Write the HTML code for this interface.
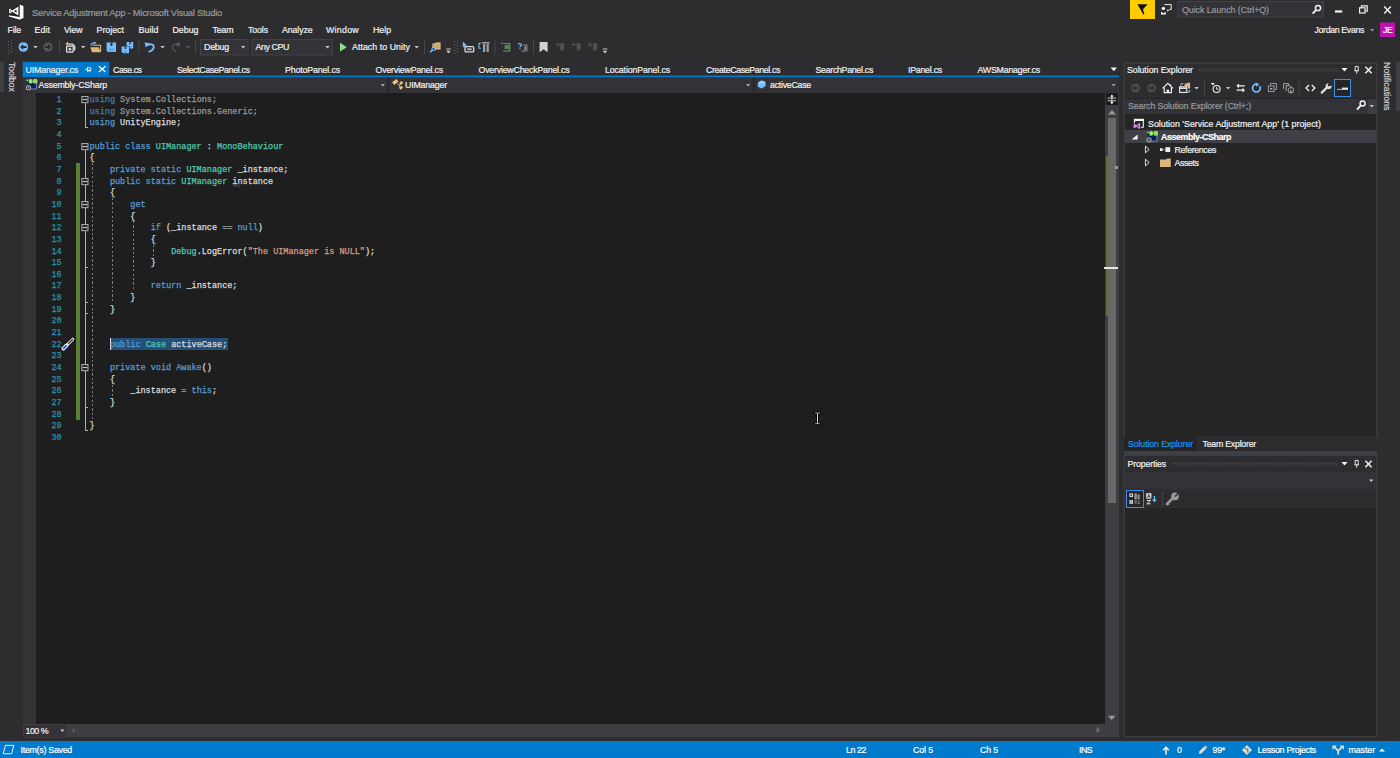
<!DOCTYPE html>
<html><head><meta charset="utf-8"><title>Service Adjustment App - Microsoft Visual Studio</title>
<style>
html,body{margin:0;padding:0;width:1400px;height:758px;overflow:hidden;background:#2d2d30;}
body{position:relative;font-family:"Liberation Sans",sans-serif;}
div,span,svg,pre{position:absolute;display:block;}
span{white-space:pre;line-height:12px;-webkit-text-stroke-width:0.2px;}
pre{margin:0;font-family:"Liberation Mono",monospace;white-space:pre;-webkit-text-stroke-width:0.25px;}
</style></head>
<body>
<div style="left:0px;top:62px;width:4px;height:30px;background:#3f3f46;"></div>
<div style="left:1396px;top:62px;width:4px;height:49px;background:#3f3f46;"></div>
<div style="left:23px;top:62px;width:86px;height:14px;background:#007acc;"></div>
<div style="left:23px;top:77px;width:1096px;height:16px;background:#333337;"></div>
<div style="left:23px;top:93px;width:1082px;height:631px;background:#1e1e1e;"></div>
<div style="left:23px;top:93px;width:13px;height:631px;background:#333333;"></div>
<div style="left:1105px;top:93px;width:14px;height:631px;background:#3e3e42;"></div>
<div style="left:1106px;top:93px;width:12px;height:12px;background:#1b1b1c;"></div>
<div style="left:1107.5px;top:118px;width:8px;height:385px;background:#686868;"></div>
<div style="left:1106px;top:155.5px;width:2px;height:160px;background:#577430;"></div>
<div style="left:1104px;top:267px;width:14px;height:2px;background:#e8e8e8;"></div>
<div style="left:1115px;top:166px;width:2.5px;height:3px;background:#9a9a9a;"></div>
<div style="left:23px;top:724px;width:1096px;height:13px;background:#3e3e42;"></div>
<div style="left:23.5px;top:724.5px;width:42px;height:12px;background:#333337;box-shadow:0 0 0 0.5px #434346;"></div>
<div style="left:0px;top:741px;width:1400px;height:17px;background:#007acc;"></div>
<div style="left:1125px;top:64px;width:251px;height:373px;background:#252526;box-shadow:0 0 0 1.5px #3a3a3f;"></div>
<div style="left:1125px;top:64px;width:251px;height:13px;background:#2d2d30;"></div>
<div style="left:1125px;top:77px;width:251px;height:21px;background:#2d2d30;"></div>
<div style="left:1125px;top:98.5px;width:251px;height:15px;background:#333337;"></div>
<div style="left:1367.5px;top:98.5px;width:8.5px;height:15px;background:#3e3e42;"></div>
<div style="left:1125px;top:130px;width:251px;height:13px;background:#3f3f46;"></div>
<div style="left:1124px;top:436px;width:73px;height:14.5px;background:#252526;"></div>
<div style="left:1197.5px;top:436.5px;width:179px;height:14px;background:#2d2d30;box-shadow:0 -0.5px 0 0 #3f3f46;"></div>
<div style="left:1123.5px;top:450.5px;width:253.5px;height:5.5px;background:#3f3f46;"></div>
<div style="left:1125px;top:457px;width:251px;height:278.5px;background:#252526;box-shadow:0 0 0 1.5px #3a3a3f;"></div>
<div style="left:1125px;top:456px;width:251px;height:16px;background:#2d2d30;"></div>
<div style="left:1125px;top:472px;width:251px;height:16.5px;background:#333337;"></div>
<div style="left:1125px;top:488.5px;width:251px;height:19px;background:#2d2d30;"></div>
<span style="left:8px;top:62px;font-size:8.8px;color:#d0d0d0;transform-origin:0 0;transform:translate(10px,0) rotate(90deg);letter-spacing:-0.1px;">Toolbox</span>
<span style="left:1381px;top:62px;font-size:8.8px;color:#d0d0d0;transform-origin:0 0;transform:translate(12px,0) rotate(90deg);letter-spacing:0.05px;">Notifications</span>
<div style="left:8px;top:40px;width:4.5px;height:13.5px;background-image:radial-gradient(circle,#707074 0.45px,transparent 0.9px),radial-gradient(circle,#707074 0.45px,transparent 0.9px);background-size:2.92px 2.92px;background-repeat:repeat-y;background-position:-0.76px 0,2.14px 1.46px;"></div>
<div style="left:454px;top:40px;width:4.5px;height:13.5px;background-image:radial-gradient(circle,#707074 0.45px,transparent 0.9px),radial-gradient(circle,#707074 0.45px,transparent 0.9px);background-size:2.92px 2.92px;background-repeat:repeat-y;background-position:-0.76px 0,2.14px 1.46px;"></div>
<div style="left:1198px;top:67.8px;width:140px;height:4.4px;background-image:radial-gradient(circle,#55555a 0.55px,transparent 0.95px),radial-gradient(circle,#55555a 0.55px,transparent 0.95px);background-size:2.92px 2.92px;background-position:0 0,1.46px 1.46px;"></div>
<div style="left:1171px;top:461.8px;width:167px;height:4.4px;background-image:radial-gradient(circle,#55555a 0.55px,transparent 0.95px),radial-gradient(circle,#55555a 0.55px,transparent 0.95px);background-size:2.92px 2.92px;background-position:0 0,1.46px 1.46px;"></div>
<svg style="left:0;top:0;" width="1400" height="758" viewBox="0 0 1400 758"><path d="M19.7,4.6L23.5,6.1V18.1L19.7,19.7Z M8.8,15.3L19.8,17V19.7L8.8,16.5Z M18.4,6.4V15.6L12.2,11.7L10,13.6L9.2,13.2V9L10,8.6L12.2,10.4Z M16.5,9.4L14,11L16.5,12.7Z M10,10.2V11.9L11,11.05Z" fill="none" stroke="#19191b" stroke-width="1.4" stroke-linejoin="round"/><path fill-rule="evenodd" d="M19.7,4.6L23.5,6.1V18.1L19.7,19.7Z M8.8,15.3L19.8,17V19.7L8.8,16.5Z M18.4,6.4V15.6L12.2,11.7L10,13.6L9.2,13.2V9L10,8.6L12.2,10.4Z M16.5,9.4L14,11L16.5,12.7Z M10,10.2V11.9L11,11.05Z" fill="#ffffff"/><circle cx="23.3" cy="47" r="4.8" fill="#75beff"/><path d="M20,47l3.2,-3v2.1h3.4v1.8h-3.4v2.1z" fill="#2d2d30"/><path d="M33.3,46h4.4l-2.2,2.5z" fill="#c8c8c8"/><circle cx="48" cy="47" r="4.6" fill="#58585b"/><path d="M51.3,47l-3.2,-3v2.1h-3.4v1.8h3.4v2.1z" fill="#2d2d30"/><path d="M59.5,40V54" stroke="#46464a" stroke-width="1"/><g fill="none" stroke="#e4e4e4" stroke-width="1.25"><path d="M68.5,44.2h4.2l2,2v4.3"/><rect x="66.6" y="46.2" width="6.6" height="5.8" rx="0.5"/><path d="M68.3,49.2h3.2M69.9,47.8v3"/></g><path d="M67.4,41.6l0.9,1.6 1.7,0.6-1.7,0.7-0.9,1.6-0.9,-1.6-1.7,-0.7 1.7,-0.6z" fill="#e8c060"/><path d="M81,46h4.4l-2.2,2.5z" fill="#c8c8c8"/><path d="M92.3,45.2h8.3v6.6" fill="none" stroke="#dcb67a" stroke-width="1.1"/><path d="M90.2,47.2h8.6l1.9,5h-8.6z" fill="#dcb67a"/><path d="M91,45.5c0.2,-2 1.6,-2.8 3.4,-2.6" fill="none" stroke="#75beff" stroke-width="1.2"/><path d="M94,41.4l2.4,1.6-2.4,1.6z" fill="#75beff"/><path d="M106.6,42.6h9.4v9.4h-8.0l-1.4,-1.4z" fill="#75beff"/><rect x="110.54799999999999" y="42.6" width="1.8800000000000001" height="3.384" fill="#2d2d30"/><rect x="108.94999999999999" y="48.428000000000004" width="4.7" height="2.82" fill="#5fa5e0"/><path d="M126.6,42h6.6v6.4h-5.199999999999999l-1.4,-1.4z" fill="#75beff"/><rect x="129.37199999999999" y="42" width="1.32" height="2.304" fill="#2d2d30"/><rect x="128.25" y="45.968" width="3.3" height="1.92" fill="#5fa5e0"/><rect x="120.9" y="46" width="8.6" height="7.6" fill="#2d2d30"/><path d="M121.6,46.6h7.4v6.6h-6.0l-1.4,-1.4z" fill="#75beff"/><rect x="124.708" y="46.6" width="1.4800000000000002" height="2.376" fill="#2d2d30"/><rect x="123.44999999999999" y="50.692" width="3.7" height="1.9799999999999998" fill="#5fa5e0"/><path d="M139,40V54" stroke="#46464a" stroke-width="1"/><path d="M147.2,45.6C150,43.2 154,44.2 153.7,47.3C153.5,49.6 150.8,51 148.6,52" fill="none" stroke="#75beff" stroke-width="1.9"/><path d="M144.6,42.3l5.2,1.1-4.1,4.1z" fill="#75beff"/><path d="M160.3,46h4.4l-2.2,2.5z" fill="#c8c8c8"/><path d="M177.8,45.4C175.4,43.4 172,44.4 172.2,47.2C172.4,49.3 174.5,50.6 176.4,51.8" fill="none" stroke="#58585b" stroke-width="1.1"/><path d="M180.2,42.3l-4.6,1 3.6,3.6z" fill="#58585b"/><path d="M186,46h4.4l-2.2,2.5z" fill="#58585b"/><path d="M195.5,40V54" stroke="#46464a" stroke-width="1"/><rect x="200.5" y="39.5" width="47.5" height="15.5" fill="#333337" stroke="#434346" stroke-width="1"/><path d="M241,46h4.4l-2.2,2.5z" fill="#c8c8c8"/><rect x="252" y="39.5" width="80.5" height="15.5" fill="#333337" stroke="#434346" stroke-width="1"/><path d="M325.3,46h4.4l-2.2,2.5z" fill="#c8c8c8"/><path d="M340,42.8l6.8,4.4-6.8,4.4z" fill="#8ae28a"/><path d="M414.5,46h4.4l-2.2,2.5z" fill="#c8c8c8"/><path d="M424.5,40V54" stroke="#46464a" stroke-width="1"/><path d="M432,43h3l0.8,-1h5.2v7.9h-9z" fill="#dcb67a" stroke="#1c2748" stroke-width="0.7"/><path d="M433.4,45.4h6.4M433.4,47.4h6.4" stroke="#b8924f" stroke-width="0.7"/><circle cx="433.5" cy="48.9" r="1.6" fill="#2d2d30" stroke="#75beff" stroke-width="1.2"/><path d="M432.3,50.2l-2.2,2" stroke="#75beff" stroke-width="1.5"/><path d="M446.2,48.6h4.6v1h-4.6z M446.2,50.800000000000004h4.6l-2.3,2.6z" fill="#c8c8c8"/><path d="M462.8,41.6l4.2,3.9-1.9,0.2 1,2.1-1,0.5-1,-2.1-1.3,1.3z" fill="#75beff"/><rect x="465" y="46.6" width="8.7" height="5.3" rx="1" fill="none" stroke="#dcdcdc" stroke-width="1.3"/><rect x="467.2" y="48.4" width="4.4" height="1.7" fill="#c0c0c0"/><path d="M481,43.2h-2v5h2" fill="none" stroke="#75beff" stroke-width="1.1"/><path d="M482,42h7.6v1.4h-7.6z M483,44h2.2v8h-2.2z M486.6,44h2.2v8h-2.2z" fill="#a2a2a2"/><path d="M495,40V54" stroke="#46464a" stroke-width="1"/><path d="M501.2,43.4h2.2M504.2,43.6h5.6v7.4h-6.6" fill="none" stroke="#8d8d8d" stroke-width="1"/><rect x="504.6" y="45" width="4.6" height="4" fill="#4f8a57"/><path d="M518.4,44.6c0.3,-1.6 3.2,-1.5 3,0.3c-0.1,1 -1.5,1.2 -1.5,2.3M519.9,48.2v1" fill="none" stroke="#75beff" stroke-width="1.2"/><path d="M522.8,45h4.2v6h-5.4" fill="none" stroke="#8d8d8d" stroke-width="1"/><rect x="524.2" y="46.4" width="2" height="3.6" fill="#8d8d8d"/><path d="M533.5,40V54" stroke="#46464a" stroke-width="1"/><path d="M539.6,42h8v10.2l-4,-3-4,3z" fill="#d2d2d2"/><path d="M560.2,43.2h3.8v8l-1.9,-1.6-1.9,1.6z M556,44.6l2.4,-2v1.4h1.6v1.2h-1.6v1.4z" fill="#515154"/><path d="M576.7,43.2h3.8v8l-1.9,-1.6-1.9,1.6z M575.8,44.6l-2.4,-2v1.4h-1.8v1.2h1.8v1.4z" fill="#515154"/><path d="M593.2,43.2h3.8v8l-1.9,-1.6-1.9,1.6z" fill="#515154"/><path d="M588,42.6l4,4M592,42.6l-4,4" stroke="#515154" stroke-width="1.1"/><path d="M602.7,48.6h4.6v1h-4.6z M602.7,50.800000000000004h4.6l-2.3,2.6z" fill="#c8c8c8"/><rect x="22.7" y="75.5" width="1096.3" height="1.7" fill="#007acc"/><rect x="22.7" y="61.8" width="86.3" height="14" fill="#007acc"/><path d="M85,69.4h2.4M87.5,67v4.8M87.5,67.8h3.3v3.2h-3.3M87.5,70.3h3.3" fill="none" stroke="#ffffff" stroke-opacity="0.88" stroke-width="0.95"/><path d="M98.9,66.2l6.5,5.8M105.4,66.2l-6.5,5.8" stroke="#ffffff" stroke-width="1.25"/><path d="M1110.6,67.6h6.4l-3.2,3.6z" fill="#f1f1f1"/><rect x="387" y="77" width="2.4" height="16" fill="#29292c"/><rect x="752.8" y="77" width="2.4" height="16" fill="#29292c"/><path d="M380.6,84h4.4l-2.2,2.5z" fill="#a8a8a8"/><path d="M746,84h4.4l-2.2,2.5z" fill="#a8a8a8"/><path d="M1111.4,84h4.4l-2.2,2.5z" fill="#9a9a9a"/><rect x="27.400000000000002" y="82" width="9" height="7" fill="#0f1d52"/><path d="M36.4,83.4v5.6h-6.6" fill="none" stroke="#7f93c8" stroke-width="0.9"/><rect x="26.3" y="79.6" width="1.8" height="1.3" fill="#86e25c"/><rect x="28.6" y="79" width="4" height="4.6" rx="1.7" fill="#86e25c"/><rect x="33.0" y="79" width="4.4" height="4.6" rx="1.3" fill="#86e25c"/><rect x="29.900000000000002" y="80.6" width="1.6" height="1.4" fill="#c8f0b0"/><circle cx="28.5" cy="87.7" r="2.1" fill="#2a2a2c" stroke="#a4a4a4" stroke-width="1.1"/><circle cx="28.5" cy="87.7" r="0.7" fill="#a4a4a4"/><g fill="#e8c47e"><rect x="392.6" y="80.2" width="5.4" height="3.4" transform="rotate(-38 395.3 81.9)"/><rect x="399.6" y="81.6" width="3.2" height="2.6" transform="rotate(-38 401.2 82.9)"/><rect x="399.4" y="86.4" width="3.2" height="2.6" transform="rotate(-38 401 87.7)"/></g><path d="M397.2,83.4l2.4,2.4M399.4,85.8l1,-2M399.4,85.8l0.6,1.4" stroke="#e8c47e" stroke-width="0.9" fill="none"/><path d="M757.8,82.6l3.9,-2.3 3.9,1.5v4.1l-3.9,2.5-3.9,-1.7z" fill="#75beff"/><path d="M759.2,83.3l2.6,-1.5 2.2,0.8" fill="none" stroke="#e0f0ff" stroke-width="0.8"/><path d="M1107.6,98.1h8.6M1107.6,100.8h8.6" stroke="#f1f1f1" stroke-width="0.8"/><path d="M1111.9,95v8.8" stroke="#f1f1f1" stroke-width="0.9"/><path d="M1110.3,96.8l1.6,-2.2 1.6,2.2zM1110.3,102l1.6,2.2 1.6,-2.2z" fill="#f1f1f1"/><path d="M1108,114.4l4,-4.4 4,4.4z" fill="#999999"/><path d="M1107.9,715.7l3.8,4.3 3.8,-4.3z" fill="#999999"/><path d="M74.6,727.4v6.4l-3.4,-3.2z" fill="#555558"/><path d="M1096.5,726.8v6.4l3.9,-3.2z" fill="#6a6a6c"/><path d="M60.2,729.6h4.4l-2.2,2.5z" fill="#c8c8c8"/><path d="M63.8,348.2L72.8,339.2" stroke="#e4e4e4" stroke-width="3" stroke-linecap="round"/><path d="M63.4,348.6L66.4,345.6" stroke="#e4e4e4" stroke-width="4" stroke-linecap="round"/><path d="M68.6,343.4L72.6,339.4" stroke="#1e1e1e" stroke-width="1.1" stroke-linecap="round"/><path d="M63.6,348.4L66,346" stroke="#2f6fd0" stroke-width="2" stroke-linecap="round"/><path d="M817.5,413v10.6M815.2,412.8c1.2,0 1.9,0.2 2.3,0.8c0.4,-0.6 1.1,-0.8 2.3,-0.8M815.2,423.8c1.2,0 1.9,-0.2 2.3,-0.8c0.4,0.6 1.1,0.8 2.3,0.8" fill="none" stroke="#000000" stroke-width="2.8" stroke-linecap="round"/><path d="M817.5,413v10.6M815.2,412.8c1.2,0 1.9,0.2 2.3,0.8c0.4,-0.6 1.1,-0.8 2.3,-0.8M815.2,423.8c1.2,0 1.9,-0.2 2.3,-0.8c0.4,0.6 1.1,0.8 2.3,0.8" fill="none" stroke="#d4d4d4" stroke-width="1"/><path d="M233.4,186h7" stroke="#8c8c8c" stroke-width="1" stroke-dasharray="1.1 1.3"/><rect x="1130" y="0" width="25" height="19" fill="#ffcc00"/><path d="M1137.4,4.2H1147.6L1143,9.2L1144.4,14.6L1143.4,14.6Z" fill="#111111"/><path d="M1164.4,4.6h6.8v5h-2l-1.6,1.6v-1.6" fill="none" stroke="#f1f1f1" stroke-width="1"/><circle cx="1163.4" cy="8.4" r="1.7" fill="#f1f1f1"/><path d="M1161,14.4v-2.6l2.4,1.4 2.4,-1.4v2.6z" fill="#f1f1f1"/><rect x="1178" y="1.5" width="145.5" height="15.5" fill="#333337" stroke="#434346" stroke-width="1"/><circle cx="1318" cy="8" r="2.6" fill="none" stroke="#f1f1f1" stroke-width="1.5"/><path d="M1316.18,9.82L1312.6,13.6" stroke="#f1f1f1" stroke-width="1.9"/><rect x="1335" y="10.4" width="7.2" height="2.2" fill="#f1f1f1"/><path d="M1361.4,7.4v-1.6h5.8v5.4h-1.6" fill="none" stroke="#f1f1f1" stroke-width="1.2"/><rect x="1359.6" y="7.8" width="5.4" height="5.2" fill="none" stroke="#f1f1f1" stroke-width="1.2"/><path d="M1384.2,6.6l6.6,6.8M1390.8,6.6l-6.6,6.8" stroke="#f1f1f1" stroke-width="1.5"/><path d="M1370,29h4.4l-2.2,2.5z" fill="#999999"/><rect x="1380" y="22.5" width="15" height="14.5" fill="#c012b0"/><path d="M1341.4,68h6.2l-3.1,3.4z" fill="#f1f1f1"/><path d="M1354.4,70.8h4.6M1356.7,70.8v2.8M1355.2,66.4h3v4.4M1355.2,66.4v4.4" fill="none" stroke="#f1f1f1" stroke-width="0.95"/><path d="M1365.4,66.8l6.2,6.4M1371.6,66.8l-6.2,6.4" stroke="#f1f1f1" stroke-width="1.55"/><path d="M1341.4,462h6.2l-3.1,3.4z" fill="#f1f1f1"/><path d="M1354.4,464.8h4.6M1356.7,464.8v2.8M1355.2,460.4h3v4.4M1355.2,460.4v4.4" fill="none" stroke="#f1f1f1" stroke-width="0.95"/><path d="M1365.4,460.8l6.2,6.4M1371.6,460.8l-6.2,6.4" stroke="#f1f1f1" stroke-width="1.55"/><circle cx="1135.6" cy="88" r="4.5" fill="#4b4b4e"/><path d="M1132.6,88l2.8,-2.6v1.8h3v1.6h-3v1.8z" fill="#2d2d30"/><circle cx="1151.6" cy="88" r="4.5" fill="#4b4b4e"/><path d="M1154.6,88l-2.8,-2.6v1.8h-3v1.6h3v1.8z" fill="#2d2d30"/><path d="M1162.6,88.4l5.2,-5 5.2,5M1164.2,87.6v5h7.2v-5M1170.4,84.2v1.6" fill="none" stroke="#f1f1f1" stroke-width="1.2"/><rect x="1166.6" y="89.6" width="2.4" height="3" fill="#f1f1f1"/><rect x="1179.6" y="86.8" width="7.2" height="5.6" fill="none" stroke="#f1f1f1" stroke-width="1.1"/><path d="M1179.6,88.2h7.2" stroke="#f1f1f1" stroke-width="1.4"/><path d="M1184.6,83.6h2l0.6,-0.8h2.9v5.6h-2.4v-2.2h-3.1z" fill="#dcb67a"/><path d="M1180.4,85.6c0.4,-1.6 1.6,-2.2 3,-2" fill="none" stroke="#75beff" stroke-width="1.1"/><path d="M1187.6,92.4c1.2,0 2.2,-0.8 2.4,-2.2" fill="none" stroke="#75beff" stroke-width="1.1"/><path d="M1194.4,87h4.4l-2.2,2.5z" fill="#c8c8c8"/><path d="M1204.5,81V95" stroke="#46464a" stroke-width="1"/><circle cx="1216.6" cy="89" r="3.5" fill="none" stroke="#f1f1f1" stroke-width="1.1"/><path d="M1216.6,86.8v2.4h2" fill="none" stroke="#f1f1f1" stroke-width="0.9"/><path d="M1210.8,83h4l-2,2.6z" fill="#f1f1f1"/><path d="M1226,87h4.4l-2.2,2.5z" fill="#c8c8c8"/><path d="M1238,85.8h6.8M1236.6,90.2h6.8" stroke="#f1f1f1" stroke-width="1.2"/><path d="M1239,83.4l-2.6,2.4 2.6,2.4zM1242.4,87.8l2.6,2.4-2.6,2.4z" fill="#f1f1f1"/><path d="M1259.8,86.2A3.9,3.9 0 1 1 1256.2,84.2" fill="none" stroke="#75beff" stroke-width="1.7"/><path d="M1255.6,82.2l3.6,2-3,2.6z" fill="#75beff"/><rect x="1268.4" y="86" width="5.6" height="5.6" fill="#2d2d30" stroke="#9a9a9a" stroke-width="1"/><path d="M1270.4,85.4v-1.8h6v5.8h-1.8" fill="none" stroke="#9a9a9a" stroke-width="1"/><rect x="1270.2" y="88" width="2" height="1.6" fill="#75beff"/><path d="M1283.6,89v-5.4h5v1.6M1286.2,91v-5.4h3.6l2.4,2.4" fill="none" stroke="#a5a5a5" stroke-width="1"/><rect x="1288.4" y="87.8" width="5" height="5" rx="1.4" fill="none" stroke="#a5a5a5" stroke-width="1"/><path d="M1290.9,90.2v2.6" stroke="#a5a5a5" stroke-width="1.6"/><path d="M1299,81V95" stroke="#46464a" stroke-width="1"/><path d="M1309,85l-3,3 3,3M1311.8,85l3,3-3,3" fill="none" stroke="#f1f1f1" stroke-width="1.3"/><path d="M1321.8,92.6l5.2,-5.2" stroke="#e0e0e0" stroke-width="2.2" stroke-linecap="round"/><path d="M1331.4,85.4A2.9,2.9 0 1 1 1328.6,83.2l-1.2,2 1.4,1.4z" fill="#e0e0e0"/><rect x="1334.5" y="79.5" width="16" height="17" fill="#252526" stroke="#3a8ee6" stroke-width="1"/><path d="M1337,89.4h5" stroke="#e0e0e0" stroke-width="0.8"/><rect x="1342" y="87.6" width="6" height="2.2" fill="#e8e8e8"/><circle cx="1362.6" cy="103.6" r="2.5" fill="none" stroke="#f1f1f1" stroke-width="1.5"/><path d="M1360.85,105.35L1357,109.6" stroke="#f1f1f1" stroke-width="1.9"/><path d="M1369.6,105h4.4l-2.2,2.5z" fill="#c8c8c8"/><path d="M1134.5,123v-3.2M1143.3,120v7.2h-2.4" fill="none" stroke="#f1f1f1" stroke-width="1.1"/><rect x="1133.9" y="118.8" width="10" height="2.2" fill="#f8f8f8"/><path fill-rule="evenodd" d="M1133.6,124.2l0.9,-0.5 2,1.6 2.6,-2.4 1,0.5v5.2l-1,0.5-2.6,-2.4-2,1.6-0.9,-0.5z M1138.6,124.8l-1.6,1.2 1.6,1.2z" fill="#d690ea"/><path d="M1137.6,134.4v5.2h-6z" fill="#f1f1f1"/><rect x="1148.0" y="134.1" width="9" height="7" fill="#0f1d52"/><path d="M1157.0,135.5v5.6h-6.6" fill="none" stroke="#7f93c8" stroke-width="0.9"/><rect x="1146.9" y="131.7" width="1.8" height="1.3" fill="#86e25c"/><rect x="1149.2" y="131.1" width="4" height="4.6" rx="1.7" fill="#86e25c"/><rect x="1153.6000000000001" y="131.1" width="4.4" height="4.6" rx="1.3" fill="#86e25c"/><rect x="1150.5" y="132.7" width="1.6" height="1.4" fill="#c8f0b0"/><circle cx="1149.1000000000001" cy="139.79999999999998" r="2.1" fill="#2a2a2c" stroke="#a4a4a4" stroke-width="1.1"/><circle cx="1149.1000000000001" cy="139.79999999999998" r="0.7" fill="#a4a4a4"/><path d="M1145.4,146.2v6.6l3.8,-3.3z" fill="none" stroke="#f1f1f1" stroke-width="0.9"/><path d="M1145.4,159.2v6.6l3.8,-3.3z" fill="none" stroke="#f1f1f1" stroke-width="0.9"/><rect x="1160" y="148.2" width="2.6" height="2.8" fill="#f1f1f1"/><rect x="1163.4" y="149.2" width="1" height="1" fill="#f1f1f1"/><rect x="1165.4" y="147.2" width="4.8" height="4.8" fill="#f1f1f1"/><path d="M1160,159.4h6.2l0.8,-1h3.8v8.6h-10.8z" fill="#dcb67a"/><path d="M1369,479.6h4.4l-2.2,2.5z" fill="#c8c8c8"/><rect x="1126.5" y="490.5" width="17" height="17" fill="#252526" stroke="#3a8ee6" stroke-width="1"/><g fill="#e0e0e0"><rect x="1129.4" y="493.4" width="3.6" height="3.6"/><rect x="1129.4" y="500.2" width="3.6" height="3.6"/></g><path d="M1130.2,495.2h2M1131.2,494.2v2M1130.2,502h2" stroke="#252526" stroke-width="0.7"/><g fill="#9a9a9a"><rect x="1134.4" y="493.4" width="2.4" height="6"/><rect x="1137.6" y="494.4" width="2" height="5"/><rect x="1134.4" y="500.6" width="2.4" height="1"/><rect x="1134.4" y="502.4" width="2.4" height="1"/><rect x="1137.6" y="500.6" width="2" height="1"/><rect x="1137.6" y="502.8" width="2.4" height="1"/></g><rect x="1146.2" y="493.2" width="5.2" height="5.4" fill="#e0e0e0"/><path d="M1147.4,497.8l1.4,-3.6 1.4,3.6M1148,496.6h1.6" fill="none" stroke="#252526" stroke-width="0.7"/><path d="M1146.8,500.4h3.8l-3.8,3.4h3.8" fill="none" stroke="#e0e0e0" stroke-width="1"/><path d="M1154.4,496v4.4" stroke="#5cc8ff" stroke-width="1.3"/><path d="M1152,499.4h4.8l-2.4,2.8z" fill="#5cc8ff"/><path d="M1162.5,492V506" stroke="#46464a" stroke-width="1"/><path d="M1167,504l5.6,-5.6" stroke="#9a9a9a" stroke-width="2.6" stroke-linecap="round"/><circle cx="1175" cy="496.4" r="3.8" fill="#9a9a9a"/><path d="M1175,496.4l3,-3" stroke="#2d2d30" stroke-width="1.4"/><path d="M1167.4,504.6l1.4,-0.2M1168.6,505l0.2,-1.2" stroke="#9a9a9a" stroke-width="1"/><path d="M5.4,745.4h8.4l-2.2,8.4h-8.4z" fill="none" stroke="#ffffff" stroke-width="0.9"/><path d="M1166,754.4v-6.8M1163.2,750.2l2.8,-3 2.8,3" fill="none" stroke="#f5ead8" stroke-width="1.6"/><path d="M1198.8,754l0.7,-2.8 4.6,-4.6 2.1,2.1-4.6,4.6z" fill="#eadcc6"/><path d="M1204.8,745.9l2.1,2.1" stroke="#eadcc6" stroke-width="1.2"/><path d="M1247,745l5,5-5,5-5,-5z" fill="#e8dcc8"/><path d="M1245.4,748.4l2.4,2.4M1247.8,748v3.6" stroke="#007acc" stroke-width="0.9"/><circle cx="1247.8" cy="752" r="0.8" fill="#007acc"/><circle cx="1245.2" cy="748.2" r="0.8" fill="#007acc"/><path d="M1338.2,754.6v-3.8l-4,-4M1338.2,750.8l4,-4" fill="none" stroke="#f0e4d0" stroke-width="1.7"/><path d="M1333.1,749.2v-3.1h3.2M1343.3,749.2v-3.1h-3.2" fill="none" stroke="#f0e4d0" stroke-width="1.3"/><path d="M1379,751.6h6l-3,-3.2z" fill="#ffffff"/></svg>
<div style="left:110px;top:338px;width:118px;height:12px;background:#264f78;"></div>
<div style="left:110px;top:338px;width:1px;height:12px;background:#e8e8e8;"></div>
<pre style="left:56.5px;top:94.0px;font-size:8.5px;line-height:12px;color:#2b91af;">1</pre>
<pre style="left:89.5px;top:94.0px;font-size:8.5px;line-height:12px;color:#dcdcdc;"><b style="font-weight:400;color:#4d7aa5">using</b><b style="font-weight:400;color:#9b9b9b"> System.Collections;</b></pre>
<pre style="left:56.5px;top:105.66px;font-size:8.5px;line-height:12px;color:#2b91af;">2</pre>
<pre style="left:89.5px;top:105.66px;font-size:8.5px;line-height:12px;color:#dcdcdc;"><b style="font-weight:400;color:#4d7aa5">using</b><b style="font-weight:400;color:#9b9b9b"> System.Collections.Generic;</b></pre>
<pre style="left:56.5px;top:117.31px;font-size:8.5px;line-height:12px;color:#2b91af;">3</pre>
<pre style="left:89.5px;top:117.31px;font-size:8.5px;line-height:12px;color:#dcdcdc;"><b style="font-weight:400;color:#569cd6">using</b> UnityEngine;</pre>
<pre style="left:56.5px;top:128.97px;font-size:8.5px;line-height:12px;color:#2b91af;">4</pre>
<pre style="left:56.5px;top:140.62px;font-size:8.5px;line-height:12px;color:#2b91af;">5</pre>
<pre style="left:89.5px;top:140.62px;font-size:8.5px;line-height:12px;color:#dcdcdc;"><b style="font-weight:400;color:#569cd6">public class </b><b style="font-weight:400;color:#4ec9b0">UIManager</b> : <b style="font-weight:400;color:#4ec9b0">MonoBehaviour</b></pre>
<pre style="left:56.5px;top:152.28px;font-size:8.5px;line-height:12px;color:#2b91af;">6</pre>
<pre style="left:89.5px;top:152.28px;font-size:8.5px;line-height:12px;color:#dcdcdc;">{</pre>
<pre style="left:56.5px;top:163.93px;font-size:8.5px;line-height:12px;color:#2b91af;">7</pre>
<pre style="left:89.5px;top:163.93px;font-size:8.5px;line-height:12px;color:#dcdcdc;">    <b style="font-weight:400;color:#569cd6">private static </b><b style="font-weight:400;color:#4ec9b0">UIManager</b> _instance;</pre>
<pre style="left:56.5px;top:175.58px;font-size:8.5px;line-height:12px;color:#2b91af;">8</pre>
<pre style="left:89.5px;top:175.58px;font-size:8.5px;line-height:12px;color:#dcdcdc;">    <b style="font-weight:400;color:#569cd6">public static </b><b style="font-weight:400;color:#4ec9b0">UIManager</b> instance</pre>
<pre style="left:56.5px;top:187.24px;font-size:8.5px;line-height:12px;color:#2b91af;">9</pre>
<pre style="left:89.5px;top:187.24px;font-size:8.5px;line-height:12px;color:#dcdcdc;">    {</pre>
<pre style="left:51.4px;top:198.89px;font-size:8.5px;line-height:12px;color:#2b91af;">10</pre>
<pre style="left:89.5px;top:198.89px;font-size:8.5px;line-height:12px;color:#dcdcdc;">        <b style="font-weight:400;color:#569cd6">get</b></pre>
<pre style="left:51.4px;top:210.55px;font-size:8.5px;line-height:12px;color:#2b91af;">11</pre>
<pre style="left:89.5px;top:210.55px;font-size:8.5px;line-height:12px;color:#dcdcdc;">        {</pre>
<pre style="left:51.4px;top:222.2px;font-size:8.5px;line-height:12px;color:#2b91af;">12</pre>
<pre style="left:89.5px;top:222.2px;font-size:8.5px;line-height:12px;color:#dcdcdc;">            <b style="font-weight:400;color:#569cd6">if</b> (_instance <b style="font-weight:400;color:#a8a8a8">==</b> <b style="font-weight:400;color:#569cd6">null</b>)</pre>
<pre style="left:51.4px;top:233.86px;font-size:8.5px;line-height:12px;color:#2b91af;">13</pre>
<pre style="left:89.5px;top:233.86px;font-size:8.5px;line-height:12px;color:#dcdcdc;">            {</pre>
<pre style="left:51.4px;top:245.51px;font-size:8.5px;line-height:12px;color:#2b91af;">14</pre>
<pre style="left:89.5px;top:245.51px;font-size:8.5px;line-height:12px;color:#dcdcdc;">                <b style="font-weight:400;color:#4ec9b0">Debug</b>.LogError(<b style="font-weight:400;color:#d69d85">&quot;The UIManager is NULL&quot;</b>);</pre>
<pre style="left:51.4px;top:257.17px;font-size:8.5px;line-height:12px;color:#2b91af;">15</pre>
<pre style="left:89.5px;top:257.17px;font-size:8.5px;line-height:12px;color:#dcdcdc;">            }</pre>
<pre style="left:51.4px;top:268.82px;font-size:8.5px;line-height:12px;color:#2b91af;">16</pre>
<pre style="left:51.4px;top:280.48px;font-size:8.5px;line-height:12px;color:#2b91af;">17</pre>
<pre style="left:89.5px;top:280.48px;font-size:8.5px;line-height:12px;color:#dcdcdc;">            <b style="font-weight:400;color:#569cd6">return</b> _instance;</pre>
<pre style="left:51.4px;top:292.13px;font-size:8.5px;line-height:12px;color:#2b91af;">18</pre>
<pre style="left:89.5px;top:292.13px;font-size:8.5px;line-height:12px;color:#dcdcdc;">        }</pre>
<pre style="left:51.4px;top:303.79px;font-size:8.5px;line-height:12px;color:#2b91af;">19</pre>
<pre style="left:89.5px;top:303.79px;font-size:8.5px;line-height:12px;color:#dcdcdc;">    }</pre>
<pre style="left:51.4px;top:315.44px;font-size:8.5px;line-height:12px;color:#2b91af;">20</pre>
<pre style="left:51.4px;top:327.1px;font-size:8.5px;line-height:12px;color:#2b91af;">21</pre>
<pre style="left:51.4px;top:338.75px;font-size:8.5px;line-height:12px;color:#2b91af;">22</pre>
<pre style="left:89.5px;top:338.75px;font-size:8.5px;line-height:12px;color:#dcdcdc;">    <b style="font-weight:400;color:#569cd6">public </b><b style="font-weight:400;color:#4ec9b0">Case</b> activeCase;</pre>
<pre style="left:51.4px;top:350.41px;font-size:8.5px;line-height:12px;color:#2b91af;">23</pre>
<pre style="left:51.4px;top:362.06px;font-size:8.5px;line-height:12px;color:#2b91af;">24</pre>
<pre style="left:89.5px;top:362.06px;font-size:8.5px;line-height:12px;color:#dcdcdc;">    <b style="font-weight:400;color:#569cd6">private void </b><b style="font-weight:400;color:#5a98d2">Awake</b>()</pre>
<pre style="left:51.4px;top:373.72px;font-size:8.5px;line-height:12px;color:#2b91af;">25</pre>
<pre style="left:89.5px;top:373.72px;font-size:8.5px;line-height:12px;color:#dcdcdc;">    {</pre>
<pre style="left:51.4px;top:385.38px;font-size:8.5px;line-height:12px;color:#2b91af;">26</pre>
<pre style="left:89.5px;top:385.38px;font-size:8.5px;line-height:12px;color:#dcdcdc;">        _instance <b style="font-weight:400;color:#a8a8a8">=</b> <b style="font-weight:400;color:#569cd6">this</b>;</pre>
<pre style="left:51.4px;top:397.03px;font-size:8.5px;line-height:12px;color:#2b91af;">27</pre>
<pre style="left:89.5px;top:397.03px;font-size:8.5px;line-height:12px;color:#dcdcdc;">    }</pre>
<pre style="left:51.4px;top:408.69px;font-size:8.5px;line-height:12px;color:#2b91af;">28</pre>
<pre style="left:51.4px;top:420.34px;font-size:8.5px;line-height:12px;color:#2b91af;">29</pre>
<pre style="left:89.5px;top:420.34px;font-size:8.5px;line-height:12px;color:#dcdcdc;">}</pre>
<pre style="left:51.4px;top:432.0px;font-size:8.5px;line-height:12px;color:#2b91af;">30</pre>
<div style="left:75.9px;top:162.9px;width:4.2px;height:257.2px;background:#5c8032;"></div>
<div style="left:85.0px;top:103.0px;width:1.2px;height:24.81px;background:#b0b0b0;"></div>
<div style="left:85.0px;top:126.91px;width:3.1px;height:1px;background:#b0b0b0;"></div>
<div style="left:85.0px;top:149.62px;width:1.2px;height:281.22px;background:#b0b0b0;"></div>
<div style="left:85.0px;top:266.77px;width:3.1px;height:1px;background:#b0b0b0;"></div>
<div style="left:85.0px;top:301.74px;width:3.1px;height:1px;background:#b0b0b0;"></div>
<div style="left:85.0px;top:313.39px;width:3.1px;height:1px;background:#b0b0b0;"></div>
<div style="left:85.0px;top:406.63px;width:3.1px;height:1px;background:#b0b0b0;"></div>
<div style="left:85.0px;top:429.94px;width:3.1px;height:1px;background:#b0b0b0;"></div>
<svg style="left:81.0px;top:96.0px;" width="8" height="8" viewBox="0 0 8 8"><rect x="0.85" y="0.55" width="6.1" height="6.1" fill="#1e1e1e" stroke="#a8a8a8" stroke-width="1.1"/><rect x="1.6" y="3.1" width="4.6" height="1" fill="#e0e0e0"/></svg>
<svg style="left:81.0px;top:142.62px;" width="8" height="8" viewBox="0 0 8 8"><rect x="0.85" y="0.55" width="6.1" height="6.1" fill="#1e1e1e" stroke="#a8a8a8" stroke-width="1.1"/><rect x="1.6" y="3.1" width="4.6" height="1" fill="#e0e0e0"/></svg>
<svg style="left:81.0px;top:177.58px;" width="8" height="8" viewBox="0 0 8 8"><rect x="0.85" y="0.55" width="6.1" height="6.1" fill="#1e1e1e" stroke="#a8a8a8" stroke-width="1.1"/><rect x="1.6" y="3.1" width="4.6" height="1" fill="#e0e0e0"/></svg>
<svg style="left:81.0px;top:200.89px;" width="8" height="8" viewBox="0 0 8 8"><rect x="0.85" y="0.55" width="6.1" height="6.1" fill="#1e1e1e" stroke="#a8a8a8" stroke-width="1.1"/><rect x="1.6" y="3.1" width="4.6" height="1" fill="#e0e0e0"/></svg>
<svg style="left:81.0px;top:224.2px;" width="8" height="8" viewBox="0 0 8 8"><rect x="0.85" y="0.55" width="6.1" height="6.1" fill="#1e1e1e" stroke="#a8a8a8" stroke-width="1.1"/><rect x="1.6" y="3.1" width="4.6" height="1" fill="#e0e0e0"/></svg>
<svg style="left:81.0px;top:364.06px;" width="8" height="8" viewBox="0 0 8 8"><rect x="0.85" y="0.55" width="6.1" height="6.1" fill="#1e1e1e" stroke="#a8a8a8" stroke-width="1.1"/><rect x="1.6" y="3.1" width="4.6" height="1" fill="#e0e0e0"/></svg>
<div style="left:91.7px;top:163.1px;width:1.4px;height:256.41px;background:repeating-linear-gradient(to bottom,#7c7c7c 0,#7c7c7c 2.3px,transparent 2.3px,transparent 4.38px);"></div>
<div style="left:112.1px;top:198.07px;width:1.4px;height:104.89px;background:repeating-linear-gradient(to bottom,#7c7c7c 0,#7c7c7c 2.3px,transparent 2.3px,transparent 4.38px);"></div>
<div style="left:112.1px;top:384.55px;width:1.4px;height:11.65px;background:repeating-linear-gradient(to bottom,#7c7c7c 0,#7c7c7c 2.3px,transparent 2.3px,transparent 4.38px);"></div>
<div style="left:132.5px;top:221.38px;width:1.4px;height:69.93px;background:repeating-linear-gradient(to bottom,#7c7c7c 0,#7c7c7c 2.3px,transparent 2.3px,transparent 4.38px);"></div>
<div style="left:152.9px;top:244.69px;width:1.4px;height:11.65px;background:repeating-linear-gradient(to bottom,#7c7c7c 0,#7c7c7c 2.3px,transparent 2.3px,transparent 4.38px);"></div>
<span style="left:32px;top:6.5px;font-size:9.4px;letter-spacing:-0.261px;color:#999999;">Service Adjustment App - Microsoft Visual Studio</span>
<span style="left:7.5px;top:24.0px;font-size:8.8px;letter-spacing:-0.172px;color:#f1f1f1;">File</span>
<span style="left:34.5px;top:24.0px;font-size:8.8px;letter-spacing:0.082px;color:#f1f1f1;">Edit</span>
<span style="left:64px;top:24.0px;font-size:8.8px;letter-spacing:-0.105px;color:#f1f1f1;">View</span>
<span style="left:96.5px;top:24.0px;font-size:8.8px;letter-spacing:0.016px;color:#f1f1f1;">Project</span>
<span style="left:138.5px;top:24.0px;font-size:8.8px;letter-spacing:0.087px;color:#f1f1f1;">Build</span>
<span style="left:172.5px;top:24.0px;font-size:8.8px;letter-spacing:0.013px;color:#f1f1f1;">Debug</span>
<span style="left:212.5px;top:24.0px;font-size:8.8px;letter-spacing:-0.129px;color:#f1f1f1;">Team</span>
<span style="left:248px;top:24.0px;font-size:8.8px;letter-spacing:-0.109px;color:#f1f1f1;">Tools</span>
<span style="left:282px;top:24.0px;font-size:8.8px;letter-spacing:-0.114px;color:#f1f1f1;">Analyze</span>
<span style="left:326px;top:24.0px;font-size:8.8px;letter-spacing:0.284px;color:#f1f1f1;">Window</span>
<span style="left:373px;top:24.0px;font-size:8.8px;letter-spacing:-0.023px;color:#f1f1f1;">Help</span>
<span style="left:204px;top:41.0px;font-size:8.8px;letter-spacing:-0.188px;color:#f1f1f1;">Debug</span>
<span style="left:255.5px;top:41.0px;font-size:8.8px;letter-spacing:-0.384px;color:#f1f1f1;">Any CPU</span>
<span style="left:352px;top:41.0px;font-size:8.8px;letter-spacing:0.052px;color:#f1f1f1;">Attach to Unity</span>
<span style="left:25.5px;top:63.5px;font-size:8.8px;letter-spacing:-0.148px;color:#f1f1f1;">UIManager.cs</span>
<span style="left:113px;top:63.5px;font-size:8.8px;letter-spacing:-0.469px;color:#f1f1f1;">Case.cs</span>
<span style="left:177px;top:63.5px;font-size:8.8px;letter-spacing:-0.346px;color:#f1f1f1;">SelectCasePanel.cs</span>
<span style="left:285px;top:63.5px;font-size:8.8px;letter-spacing:-0.133px;color:#f1f1f1;">PhotoPanel.cs</span>
<span style="left:375.5px;top:63.5px;font-size:8.8px;letter-spacing:-0.182px;color:#f1f1f1;">OverviewPanel.cs</span>
<span style="left:478.5px;top:63.5px;font-size:8.8px;letter-spacing:-0.207px;color:#f1f1f1;">OverviewCheckPanel.cs</span>
<span style="left:605px;top:63.5px;font-size:8.8px;letter-spacing:-0.125px;color:#f1f1f1;">LocationPanel.cs</span>
<span style="left:706px;top:63.5px;font-size:8.8px;letter-spacing:-0.372px;color:#f1f1f1;">CreateCasePanel.cs</span>
<span style="left:815.5px;top:63.5px;font-size:8.8px;letter-spacing:-0.295px;color:#f1f1f1;">SearchPanel.cs</span>
<span style="left:908px;top:63.5px;font-size:8.8px;letter-spacing:-0.243px;color:#f1f1f1;">IPanel.cs</span>
<span style="left:977.5px;top:63.5px;font-size:8.8px;letter-spacing:-0.207px;color:#f1f1f1;">AWSManager.cs</span>
<span style="left:38.5px;top:79.0px;font-size:8.8px;letter-spacing:-0.159px;color:#f1f1f1;">Assembly-CSharp</span>
<span style="left:405px;top:79.0px;font-size:8.8px;letter-spacing:-0.170px;color:#f1f1f1;">UIManager</span>
<span style="left:770px;top:79.0px;font-size:8.8px;letter-spacing:-0.253px;color:#f1f1f1;">activeCase</span>
<span style="left:1182px;top:4.0px;font-size:8.8px;letter-spacing:-0.036px;color:#999999;">Quick Launch (Ctrl+Q)</span>
<span style="left:1314.5px;top:24.0px;font-size:8.8px;letter-spacing:-0.358px;color:#f1f1f1;">Jordan Evans</span>
<span style="left:1383px;top:24.0px;font-size:8.6px;letter-spacing:-0.316px;color:#ffffff;">JE</span>
<span style="left:1127px;top:64.0px;font-size:8.8px;letter-spacing:-0.059px;color:#f1f1f1;">Solution Explorer</span>
<span style="left:1128px;top:100.0px;font-size:8.8px;letter-spacing:-0.117px;color:#999999;">Search Solution Explorer (Ctrl+;)</span>
<span style="left:1148px;top:117.5px;font-size:8.8px;letter-spacing:0.010px;color:#f1f1f1;">Solution &#x27;Service Adjustment App&#x27; (1 project)</span>
<span style="left:1161px;top:130.5px;font-size:8.8px;letter-spacing:-0.385px;color:#ffffff;font-weight:700;">Assembly-CSharp</span>
<span style="left:1174.5px;top:144.0px;font-size:8.8px;letter-spacing:-0.350px;color:#f1f1f1;">References</span>
<span style="left:1174.5px;top:157.0px;font-size:8.8px;letter-spacing:-0.401px;color:#f1f1f1;">Assets</span>
<span style="left:1128px;top:437.5px;font-size:8.8px;letter-spacing:-0.118px;color:#0e97f5;">Solution Explorer</span>
<span style="left:1202.5px;top:437.5px;font-size:8.8px;letter-spacing:-0.248px;color:#f1f1f1;">Team Explorer</span>
<span style="left:1127.5px;top:458.0px;font-size:8.8px;letter-spacing:-0.159px;color:#f1f1f1;">Properties</span>
<span style="left:25.5px;top:724.5px;font-size:8.8px;letter-spacing:-0.491px;color:#f1f1f1;">100 %</span>
<span style="left:20.5px;top:744.0px;font-size:8.8px;letter-spacing:-0.251px;color:#ffffff;">Item(s) Saved</span>
<span style="left:846px;top:744.0px;font-size:8.8px;letter-spacing:-0.403px;color:#ffffff;">Ln 22</span>
<span style="left:913px;top:744.0px;font-size:8.8px;letter-spacing:-0.109px;color:#ffffff;">Col 5</span>
<span style="left:980px;top:744.0px;font-size:8.8px;letter-spacing:-0.148px;color:#ffffff;">Ch 5</span>
<span style="left:1079px;top:744.0px;font-size:8.8px;letter-spacing:-0.557px;color:#ffffff;">INS</span>
<span style="left:1177px;top:744.0px;font-size:8.8px;letter-spacing:-0.406px;color:#ffffff;">0</span>
<span style="left:1212.5px;top:744.0px;font-size:8.8px;letter-spacing:-0.240px;color:#ffffff;">99*</span>
<span style="left:1257.5px;top:744.0px;font-size:8.8px;letter-spacing:-0.273px;color:#ffffff;">Lesson Projects</span>
<span style="left:1348.5px;top:744.0px;font-size:8.8px;letter-spacing:-0.065px;color:#ffffff;">master</span>
</body></html>
